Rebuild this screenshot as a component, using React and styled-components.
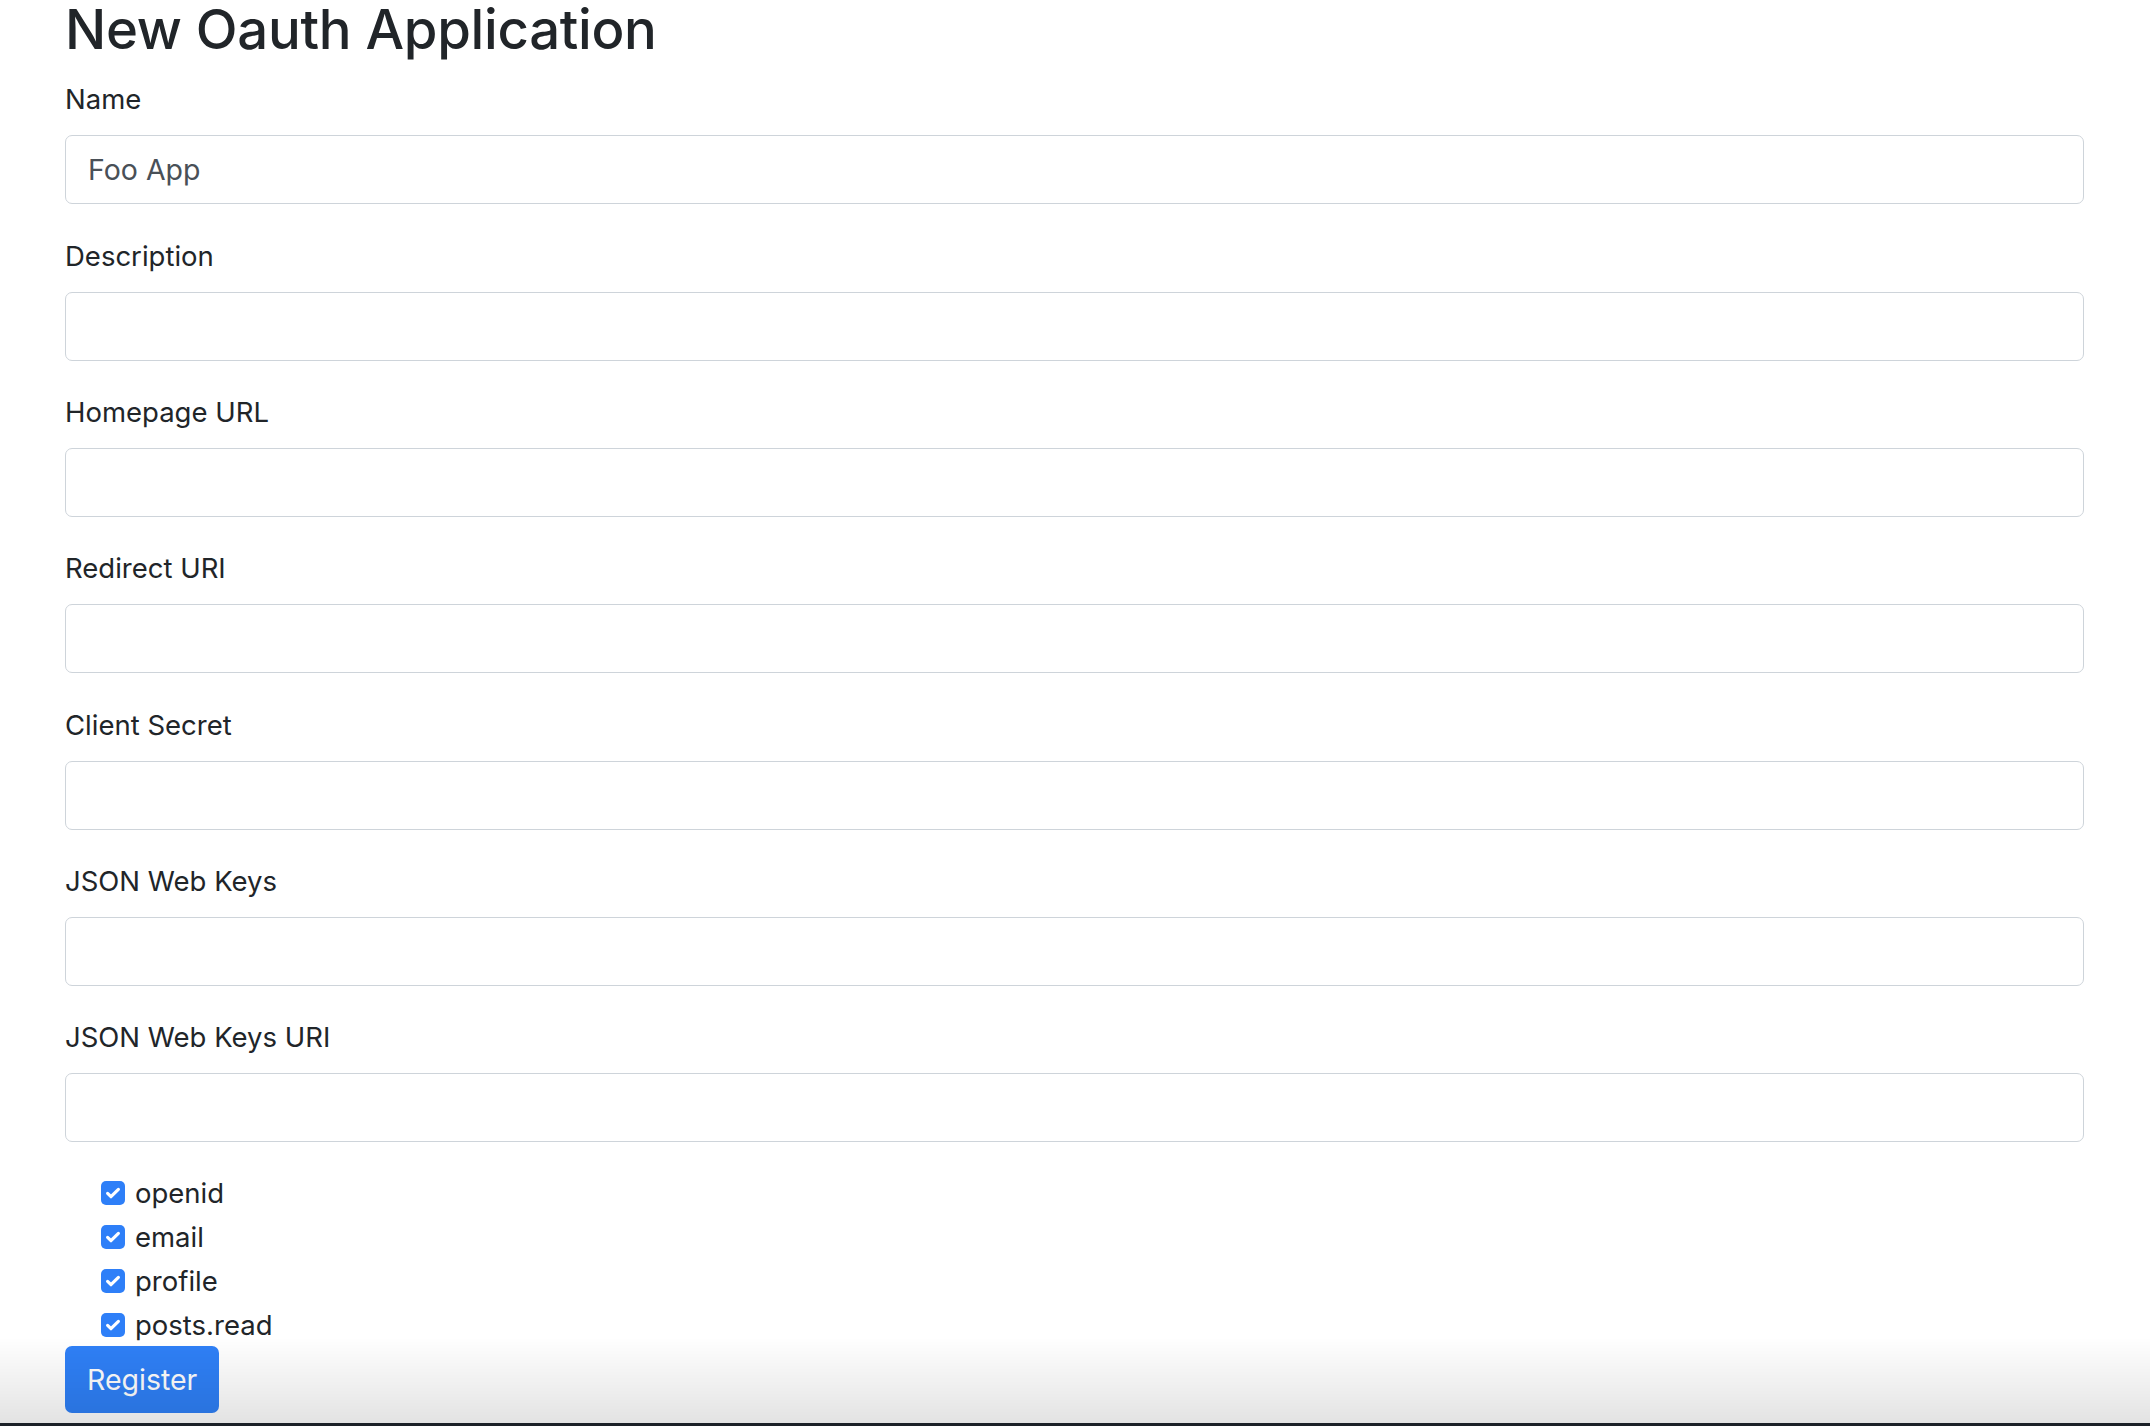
import React from "react";
import styled, { createGlobalStyle } from "styled-components";

const fields = [
  { label: "Name", value: "Foo App" },
  { label: "Description", value: "" },
  { label: "Homepage URL", value: "" },
  { label: "Redirect URI", value: "" },
  { label: "Client Secret", value: "" },
  { label: "JSON Web Keys", value: "" },
  { label: "JSON Web Keys URI", value: "" },
];

const scopes = ["openid", "email", "profile", "posts.read"];

export default function App() {
  return (
    <>
      <GlobalStyle />
      <SPage>
        <STitle>New Oauth Application</STitle>
        <form onSubmit={(e) => e.preventDefault()}>
          {fields.map((f) => (
            <SGroup key={f.label}>
              <SLabel>{f.label}</SLabel>
              <SInput type="text" defaultValue={f.value} />
            </SGroup>
          ))}

          <SChecks>
            {scopes.map((s) => (
              <SCheck key={s}>
                <SBox>
                  <svg width="18" height="18" viewBox="0 0 16 16">
                    <path
                      d="M3.2 8.3l3 3L12.8 4.8"
                      fill="none"
                      stroke="#fff"
                      strokeWidth="2.8"
                      strokeLinecap="round"
                      strokeLinejoin="round"
                    />
                  </svg>
                </SBox>
                {s}
              </SCheck>
            ))}
          </SChecks>

          <SButton type="submit">Register</SButton>
        </form>
      </SPage>
      <SShade />
    </>
  );
}

// =========================== STYLES ============================= //

const GlobalStyle = createGlobalStyle`
  html, body {
    margin: 0;
    padding: 0;
    background: #fff;
  }
  body {
    font-family: Inter, "Noto Sans", "Liberation Sans", sans-serif;
    color: #212529;
  }
`;

const SPage = styled.div`
  padding: 0 66px 0 65px;
  width: 2150px;
  box-sizing: border-box;
  & form {
    margin: 0;
  }
`;

const STitle = styled.h1`
  margin: -3px 0 20px;
  font-size: 54.5px;
  font-weight: 500;
  line-height: 1.2;
  letter-spacing: -0.3px;
  color: #212529;
`;

const SGroup = styled.div`
  display: flex;
  flex-direction: column;
  margin-bottom: 34.3px;
`;

const SLabel = styled.label`
  font-size: 27.5px;
  line-height: 34px;
  margin-bottom: 19px;
  color: #212529;
`;

const SInput = styled.input`
  box-sizing: border-box;
  width: 100%;
  height: 69px;
  padding: 0 22px;
  font-family: inherit;
  font-size: 28.5px;
  color: #495057;
  background: #fff;
  border: 1.5px solid #ced4da;
  border-radius: 7px;
  outline: none;
`;

const SChecks = styled.div`
  display: flex;
  flex-direction: column;
  padding-left: 36px;
  margin-top: -5px;
`;

const SCheck = styled.label`
  display: flex;
  align-items: center;
  gap: 10px;
  height: 44px;
  font-size: 27.5px;
  color: #212529;
`;

const SBox = styled.span`
  display: flex;
  align-items: center;
  justify-content: center;
  width: 24px;
  height: 24px;
  border-radius: 5px;
  background: #2e7ff8;
`;

const SButton = styled.button`
  display: block;
  height: 67px;
  padding: 0 22px;
  margin-top: -1px;
  font-family: inherit;
  font-size: 28.5px;
  color: #fff;
  background: #2f80f7;
  border: none;
  border-radius: 7px;
  cursor: pointer;
`;

const SShade = styled.div`
  position: fixed;
  left: 0;
  right: 0;
  bottom: 0;
  height: 86px;
  pointer-events: none;
  background: linear-gradient(rgba(0, 0, 0, 0), rgba(0, 0, 0, 0.11));
  border-bottom: 3px solid #1c2128;
`;
